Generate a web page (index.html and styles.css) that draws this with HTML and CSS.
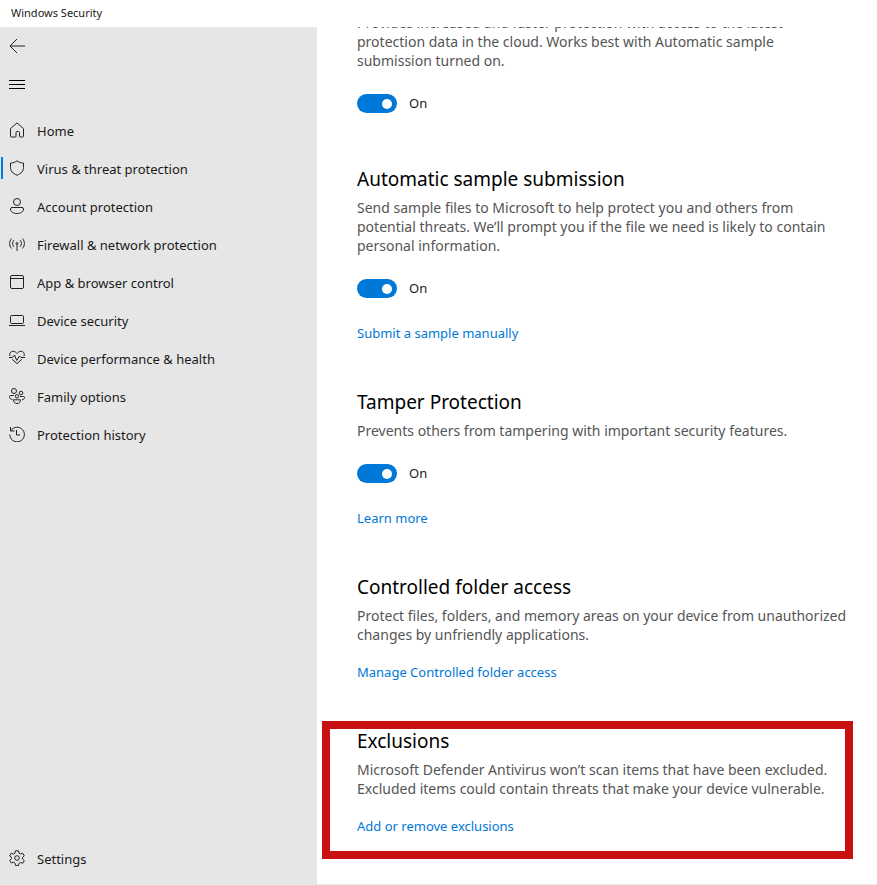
FILE: index.html
```html
<!DOCTYPE html>
<html lang="en">
  <head>
    <meta charset="utf-8">
    <title>Windows Security</title>
    <link rel="stylesheet" href="styles.css">
  </head>
  <body>
    <header class="titlebar">Windows Security</header>

    <div class="container">
      <nav class="sidebar">
        <button class="icon-button" type="button" aria-label="Back">
          <svg class="icon" viewBox="0 0 16 16"><path d="M8 1 1 8l7 7M1 8h15"/></svg>
        </button>
        <button class="icon-button" type="button" aria-label="Menu">
          <svg class="icon icon-dark" viewBox="0 0 16 16"><path d="M0 3.500h16M0 7.500h16M0 11.500h16"/></svg>
        </button>

        <div class="nav-list">
          <a class="nav-item" href="#">
            <svg class="icon" viewBox="0 0 16 16"><path d="M1.500 6.600 8 .9l6.500 5.700v7.400q0 1-1 1h-2.500q-.5 0-.5-.5v-4q0-1-1-1h-1.500q-1 0-1 1v4q0 .5-.5.5H2.500q-1 0-1-1z"/></svg>
            Home
          </a>
          <a class="nav-item selected" href="#">
            <svg class="icon" viewBox="0 0 16 16"><path d="M8 .8c2 1.500 4 2.200 6.500 2.300v4.400c0 3.500-2.200 6-6.500 7.700-4.300-1.700-6.500-4.200-6.500-7.700V3.100C4 3 6 2.300 8 .8z"/></svg>
            Virus &amp; threat protection
          </a>
          <a class="nav-item" href="#">
            <svg class="icon" viewBox="0 0 16 16"><circle cx="8" cy="4" r="3.500"/><path d="M3 9.500h10q1.500 0 1.500 1.500c0 3-3 4.500-6.500 4.500S1.500 14 1.500 11q0-1.500 1.500-1.500z"/></svg>
            Account protection
          </a>
          <a class="nav-item" href="#">
            <svg class="icon" viewBox="0 0 16 16"><path d="M2.500 2.500C0 5.500 0 9.500 2.500 12.500M13.500 2.500c2.500 3 2.500 7 0 10M4.800 4.200c-1.600 2-1.600 4.600 0 6.600M11.200 4.200c1.600 2 1.600 4.600 0 6.600M8 8.500v6.500"/><circle cx="8" cy="7.500" r="1"/></svg>
            Firewall &amp; network protection
          </a>
          <a class="nav-item" href="#">
            <svg class="icon" viewBox="0 0 16 16"><rect x="1.500" y="1.500" width="13" height="13" rx="1.500"/><path d="M1.500 4.500h13"/></svg>
            App &amp; browser control
          </a>
          <a class="nav-item" href="#">
            <svg class="icon" viewBox="0 0 16 16"><rect x="1.500" y="3.500" width="13" height="8" rx="1"/><path d="M0 13.500h16"/></svg>
            Device security
          </a>
          <a class="nav-item" href="#">
            <svg class="icon" viewBox="0 0 16 16"><path d="M1 6C0 3 2 1.300 4 1.300c2 0 3 1 4 2.200 1-1.200 2-2.200 4-2.200 2 0 4 1.700 3 4.700M3.200 9.300 8 13.700l4.800-4.400M0 7.500h3.500L5.500 5l2.300 5.500L10.500 6l1.500 1.500h4"/></svg>
            Device performance &amp; health
          </a>
          <a class="nav-item" href="#">
            <svg class="icon" viewBox="0 0 16 16"><circle cx="5" cy="3" r="2.500"/><circle cx="12" cy="5" r="1.800"/><circle cx="8" cy="8.300" r="1.700"/><path d="M4.800 7.500H1.500q-1 0-1 1c0 1.800 1 2.800 3 3M11 8.500h3.500q1 0 1 1c0 1.500-1 2.200-2.500 2.300M4.500 11.800h7c0 2.500-1.500 3.700-3.500 3.700s-3.500-1.200-3.500-3.700z"/></svg>
            Family options
          </a>
          <a class="nav-item" href="#">
            <svg class="icon" viewBox="0 0 16 16"><path d="M1.500 1v4h4M1.700 5A7.300 7.300 0 1 1 .8 8.500M7.500 4v5H11"/></svg>
            Protection history
          </a>
        </div>

        <a class="nav-item" href="#">
          <svg class="icon" viewBox="0 0 16 16"><path d="M6.500.8h3l.5 2.300 1.500.9 2.200-.8 1.600 2.700-1.800 1.600v1.500l1.800 1.600-1.600 2.700-2.200-.8-1.500.9-.5 2.200h-3L6 13.100l-1.500-.9-2.200.8-1.600-2.700L2.500 8.700V7.300L.7 5.900l1.600-2.700 2.200.8L6 3.100z"/><circle cx="8" cy="8" r="2.300"/></svg>
          Settings
        </a>
      </nav>

      <main class="content">
        <section class="setting">
          <p class="description">Provides increased and faster protection with access to the latest protection data in the cloud. Works best with Automatic sample submission turned on.</p>
          <label class="toggle"><input class="switch" type="checkbox" role="switch" checked>On</label>
        </section>

        <section class="setting">
          <h2 class="heading">Automatic sample submission</h2>
          <p class="description">Send sample files to Microsoft to help protect you and others from potential threats. We’ll prompt you if the file we need is likely to contain personal information.</p>
          <label class="toggle"><input class="switch" type="checkbox" role="switch" checked>On</label>
          <a class="link" href="#">Submit a sample manually</a>
        </section>

        <section class="setting">
          <h2 class="heading">Tamper Protection</h2>
          <p class="description">Prevents others from tampering with important security features.</p>
          <label class="toggle"><input class="switch" type="checkbox" role="switch" checked>On</label>
          <a class="link" href="#">Learn more</a>
        </section>

        <section class="setting">
          <h2 class="heading">Controlled folder access</h2>
          <p class="description">Protect files, folders, and memory areas on your device from unauthorized changes by unfriendly applications.</p>
          <a class="link" href="#">Manage Controlled folder access</a>
        </section>

        <section class="setting highlighted">
          <h2 class="heading">Exclusions</h2>
          <p class="description">Microsoft Defender Antivirus won’t scan items that have been excluded. Excluded items could contain threats that make your device vulnerable.</p>
          <a class="link" href="#">Add or remove exclusions</a>
        </section>
      </main>
    </div>
  </body>
</html>
```
FILE: styles.css
```css
* {
  box-sizing: border-box;
}

body {
  margin: 0;
  height: 100vh;
  display: flex;
  flex-direction: column;
  background-color: #fff;
  color: #1a1a1a;
  font-family: "Segoe UI", "Noto Sans", sans-serif;
  font-size: 13px;
  line-height: 19px;
  border-bottom: 1px solid #ececf2;
}

.titlebar {
  height: 27px;
  padding: 3px 11px;
  font-size: 11px;
}

.container {
  flex: 1;
  min-height: 0;
  display: flex;
}

.sidebar {
  width: 317px;
  flex-shrink: 0;
  display: flex;
  flex-direction: column;
  gap: 1px;
  padding-bottom: 6px;
  background-color: #e6e6e6;
}

.icon-button {
  display: flex;
  align-items: center;
  height: 38px;
  padding: 0 9px;
  border: none;
  background: none;
}

.icon {
  width: 16px;
  height: 16px;
  flex-shrink: 0;
  fill: none;
  stroke: #222;
  stroke-width: 1;
}

.icon-dark {
  stroke: #000;
}

.nav-list {
  flex: 1;
  padding-top: 7px;
}

.nav-item {
  position: relative;
  display: flex;
  align-items: center;
  gap: 12px;
  height: 38px;
  padding: 0 9px;
  color: #1a1a1a;
  text-decoration: none;
}

.nav-item .icon {
  margin-bottom: 2px;
}

/* accent bar on the current page */
.selected::before {
  content: "";
  position: absolute;
  left: 1px;
  top: 7px;
  width: 2px;
  height: 22px;
  background-color: #0078d7;
}

.content {
  flex: 1;
  overflow: hidden;
  padding: 0 24px 0 40px;
}

.setting {
  position: relative;
  display: flex;
  flex-direction: column;
  align-items: flex-start;
  margin-bottom: 46px;
}

/* the page is scrolled part way through the first setting */
.setting:first-child {
  margin-top: -14px;
}

.heading {
  margin: 0 0 6px;
  font-size: 19px;
  font-weight: normal;
  line-height: 26px;
  color: #000;
}

.description {
  margin: 0;
  padding-right: 4px;
  font-size: 14px;
  color: #555;
}

.toggle {
  display: flex;
  align-items: center;
  gap: 12px;
  margin: 24px 0 7px;
}

.switch {
  appearance: none;
  display: flex;
  align-items: center;
  justify-content: flex-end;
  width: 40px;
  height: 19px;
  margin: 0;
  padding: 0 5px;
  border-radius: 10px;
  background-color: #0078d7;
}

.switch::before {
  content: "";
  width: 10px;
  height: 10px;
  border-radius: 50%;
  background-color: #fff;
}

.switch:not(:checked) {
  justify-content: flex-start;
  background-color: #777;
}

.link {
  margin-top: 19px;
  color: #0078d7;
  text-decoration: none;
}

.highlighted::after {
  content: "";
  position: absolute;
  top: -7px;
  right: 0;
  bottom: -23px;
  left: -35px;
  border: 8px solid #c91111;
  pointer-events: none;
}
```
